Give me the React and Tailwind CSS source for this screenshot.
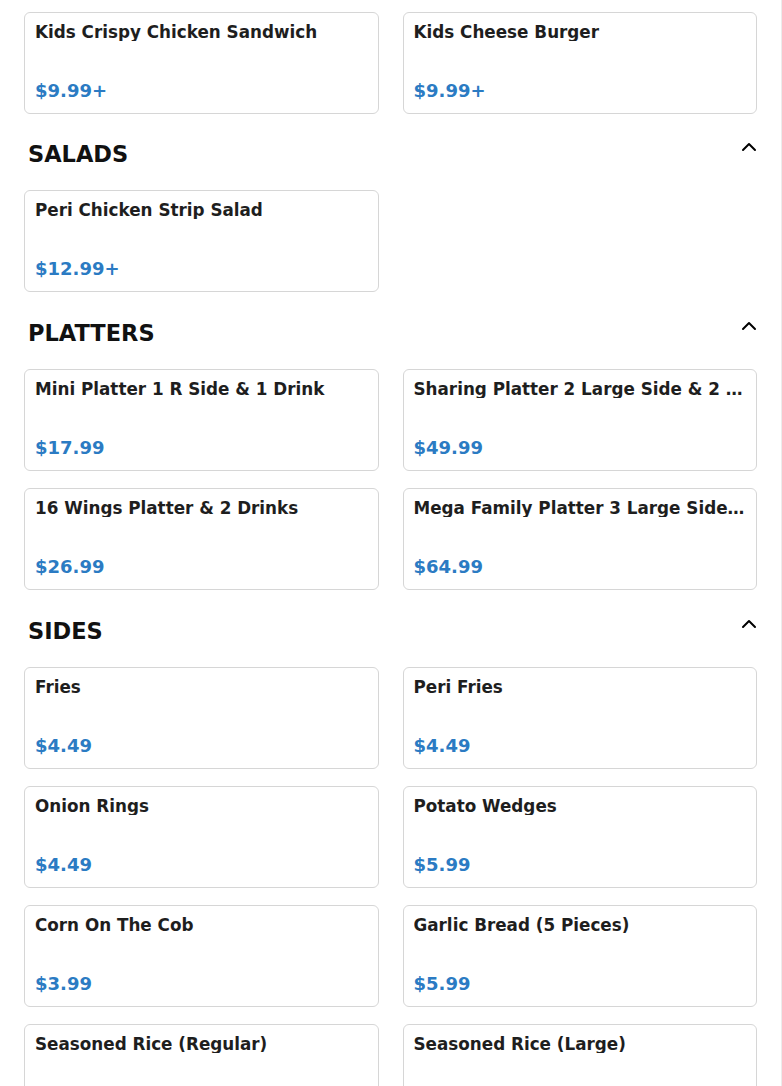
import { ChevronUp } from "lucide-react";

const sections = [
  {
    title: null,
    items: [
      { name: "Kids Crispy Chicken Sandwich", price: "$9.99+" },
      { name: "Kids Cheese Burger", price: "$9.99+" },
    ],
  },
  {
    title: "SALADS",
    first: true,
    items: [{ name: "Peri Chicken Strip Salad", price: "$12.99+" }],
  },
  {
    title: "PLATTERS",
    items: [
      { name: "Mini Platter 1 R Side & 1 Drink", price: "$17.99" },
      { name: "Sharing Platter 2 Large Side & 2 Drinks", price: "$49.99" },
      { name: "16 Wings Platter & 2 Drinks", price: "$26.99" },
      { name: "Mega Family Platter 3 Large Sides & 4 Drinks", price: "$64.99" },
    ],
  },
  {
    title: "SIDES",
    items: [
      { name: "Fries", price: "$4.49" },
      { name: "Peri Fries", price: "$4.49" },
      { name: "Onion Rings", price: "$4.49" },
      { name: "Potato Wedges", price: "$5.99" },
      { name: "Corn On The Cob", price: "$3.99" },
      { name: "Garlic Bread (5 Pieces)", price: "$5.99" },
      { name: "Seasoned Rice (Regular)", price: "$3.49" },
      { name: "Seasoned Rice (Large)", price: "$4.99" },
    ],
  },
];

function ItemCard({ item }) {
  return (
    <div className="h-[102px] min-w-0 border border-[#d6d6d6] rounded-md bg-white p-2.5 flex flex-col justify-between">
      <h3 className="text-[16.8px] leading-[18px] font-bold text-[#1e1e1e] truncate">
        {item.name}
      </h3>
      <p className="text-[18px] leading-[25px] font-bold text-[#2b7bc3]">
        {item.price}
      </p>
    </div>
  );
}

export default function App() {
  return (
    <div
      className="min-h-screen bg-white border-r border-[#ececec] px-6 pt-3 pb-10"
      style={{ fontFamily: '"DejaVu Sans", sans-serif' }}
    >
      {sections.map((sec, i) => (
        <section key={i}>
          {sec.title && (
            <div
              className={
                (sec.first ? "mt-[26px]" : "mt-[27px]") +
                " mb-[22px] h-[28px] flex items-center justify-between pl-1"
              }
            >
              <h2 className="text-[22.5px] leading-[28px] font-bold text-[#111]">
                {sec.title}
              </h2>
              <ChevronUp
                size={24}
                strokeWidth={2}
                className="text-black mb-[14px] -mr-1"
              />
            </div>
          )}
          <div className="grid grid-cols-2 gap-x-6 gap-y-[17px]">
            {sec.items.map((item) => (
              <ItemCard key={item.name} item={item} />
            ))}
          </div>
        </section>
      ))}
    </div>
  );
}
